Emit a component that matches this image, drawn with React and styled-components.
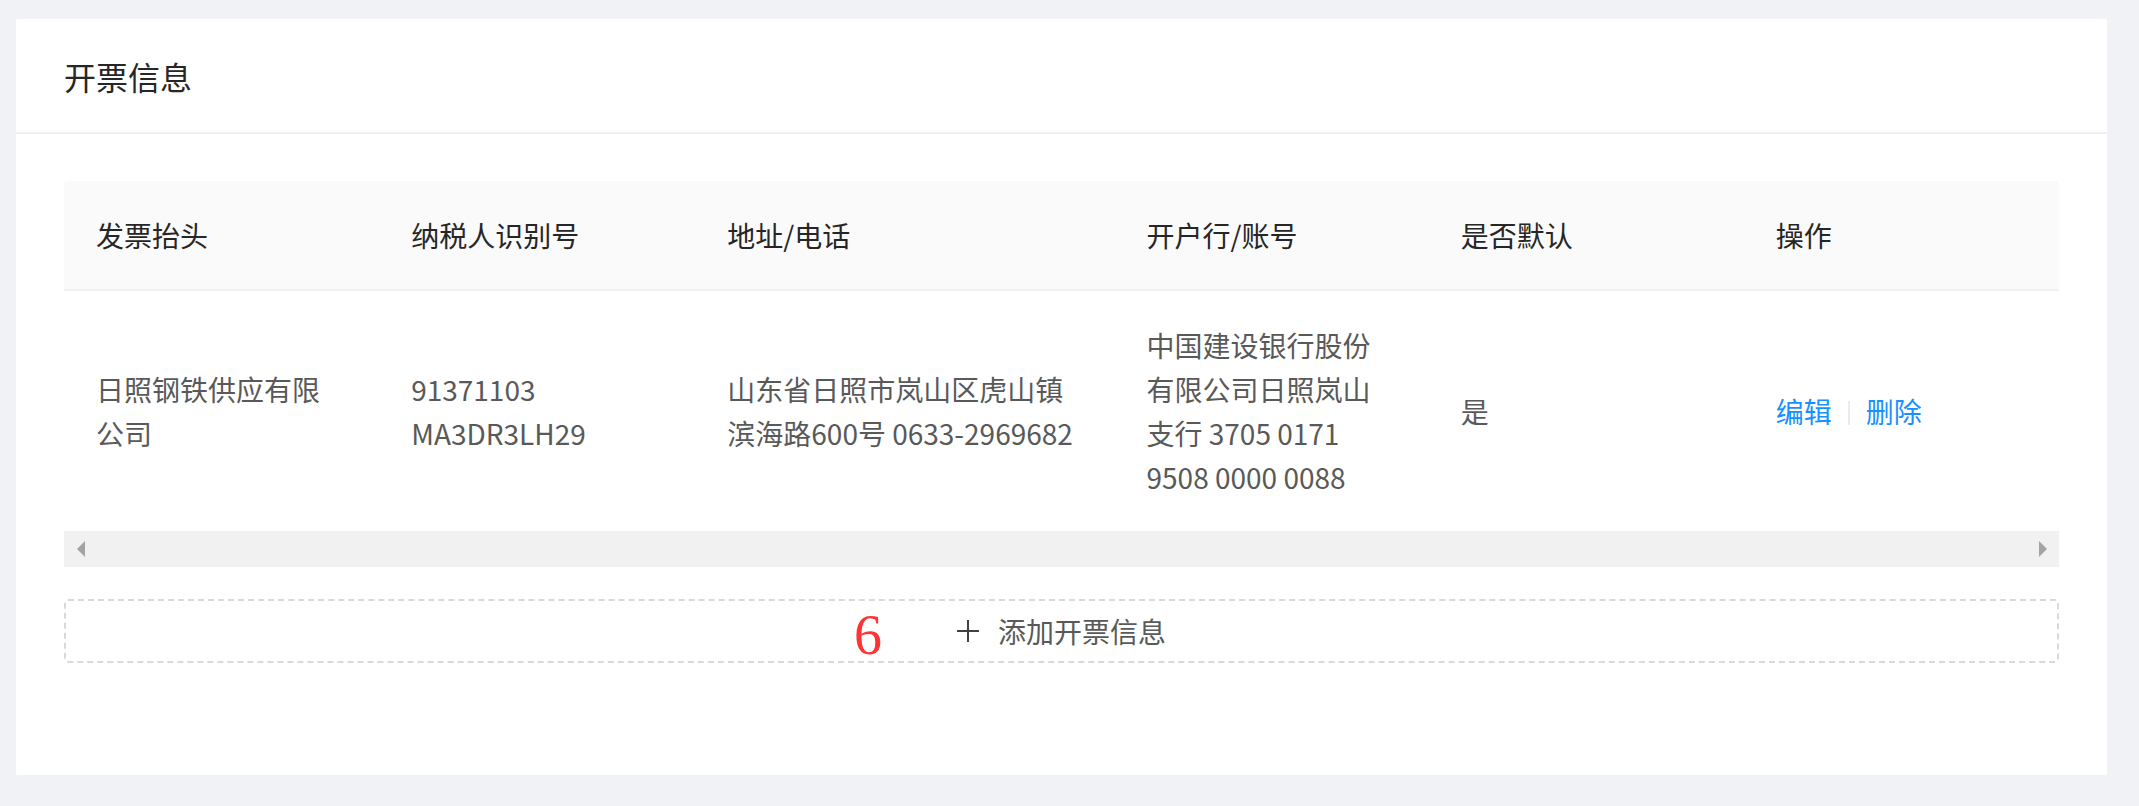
import styled, { createGlobalStyle } from "styled-components";

const GlobalStyle = createGlobalStyle`
  html, body {
    margin: 0;
    padding: 0;
    background: #f0f2f5;
    font-family: "Noto Sans CJK SC", "Noto Sans", sans-serif;
  }
`;

const columns = [
  { key: "title", label: "发票抬头", width: 315 },
  { key: "taxNo", label: "纳税人识别号", width: 316 },
  { key: "address", label: "地址/电话", width: 419 },
  { key: "bank", label: "开户行/账号", width: 314 },
  { key: "isDefault", label: "是否默认", width: 315 },
  { key: "action", label: "操作", width: 315 },
];

const rows = [
  {
    id: 1,
    title: "日照钢铁供应有限公司",
    taxNo: "91371103 MA3DR3LH29",
    address: "山东省日照市岚山区虎山镇滨海路600号 0633-2969682",
    bank: "中国建设银行股份有限公司日照岚山支行 3705 0171 9508 0000 0088",
    isDefault: "是",
  },
];

const Page = styled.div`
  min-height: 100vh;
  box-sizing: border-box;
  padding: 19px 32px 31px 16px;
`;

const Card = styled.div`
  background: #fff;
  border-radius: 2px;
`;

const CardHead = styled.div`
  height: 113px;
  display: flex;
  align-items: center;
  padding: 0 48px;
  border-bottom: 2px solid #f0f0f0;
  font-size: 32px;
  color: #262626;
`;

const CardBody = styled.div`
  padding: 47px 48px 112px 48px;
`;

const Table = styled.table`
  width: 100%;
  table-layout: fixed;
  border-collapse: separate;
  border-spacing: 0;
  font-size: 28px;
  line-height: 44px;
`;

const Th = styled.th`
  background: #fafafa;
  color: #262626;
  font-weight: 400;
  text-align: left;
  padding: 32px;
  border-bottom: 2px solid #f0f0f0;
  &:first-child { border-top-left-radius: 4px; }
  &:last-child { border-top-right-radius: 4px; }
`;

const Td = styled.td`
  color: #595959;
  padding: 32px;
  vertical-align: middle;
`;

const Link = styled.a`
  color: #1890ff;
  cursor: pointer;
`;

const Divider = styled.span`
  display: inline-block;
  width: 2px;
  height: 24px;
  margin: 0 16px;
  background: #ebebeb;
  vertical-align: middle;
  position: relative;
  top: -2px;
`;

const ScrollTrack = styled.div`
  height: 36px;
  background: #f1f1f1;
  display: flex;
  align-items: center;
  justify-content: space-between;
  padding: 0 12px 0 13px;
`;

const Arrow = styled.span`
  width: 0;
  height: 0;
  border-top: 8px solid transparent;
  border-bottom: 8px solid transparent;
  ${({ dir }) =>
    dir === "left"
      ? "border-right: 8px solid #a3a3a3;"
      : "border-left: 8px solid #a3a3a3;"}
`;

const AddButton = styled.div`
  position: relative;
  margin-top: 32px;
  height: 64px;
  box-sizing: border-box;
  border: 2px dashed #d9d9d9;
  border-radius: 4px;
  display: flex;
  align-items: center;
  justify-content: center;
  gap: 19px;
  font-size: 28px;
  color: #595959;
`;

const Mark = styled.span`
  position: absolute;
  left: 788px;
  top: 6px;
  font-family: "Liberation Serif", serif;
  font-size: 56px;
  line-height: 1;
  color: #ff3333;
`;

const PlusIcon = () => (
  <svg width="22" height="22" viewBox="0 0 22 22">
    <path d="M11 0v22M0 11h22" stroke="#404040" strokeWidth="2" fill="none" />
  </svg>
);

const App = () => {
  return (
    <Page>
      <GlobalStyle />
      <Card>
        <CardHead>开票信息</CardHead>
        <CardBody>
          <Table>
            <colgroup>
              {columns.map((c) => (
                <col key={c.key} style={{ width: c.width }} />
              ))}
            </colgroup>
            <thead>
              <tr>
                {columns.map((c) => (
                  <Th key={c.key}>{c.label}</Th>
                ))}
              </tr>
            </thead>
            <tbody>
              {rows.map((r) => (
                <tr key={r.id}>
                  <Td>{r.title}</Td>
                  <Td>{r.taxNo}</Td>
                  <Td>{r.address}</Td>
                  <Td>{r.bank}</Td>
                  <Td>{r.isDefault}</Td>
                  <Td>
                    <Link>编辑</Link>
                    <Divider />
                    <Link>删除</Link>
                  </Td>
                </tr>
              ))}
            </tbody>
          </Table>
          <ScrollTrack>
            <Arrow dir="left" />
            <Arrow dir="right" />
          </ScrollTrack>
          <AddButton>
            <Mark>6</Mark>
            <PlusIcon />
            <span>添加开票信息</span>
          </AddButton>
        </CardBody>
      </Card>
    </Page>
  );
};

export default App;
